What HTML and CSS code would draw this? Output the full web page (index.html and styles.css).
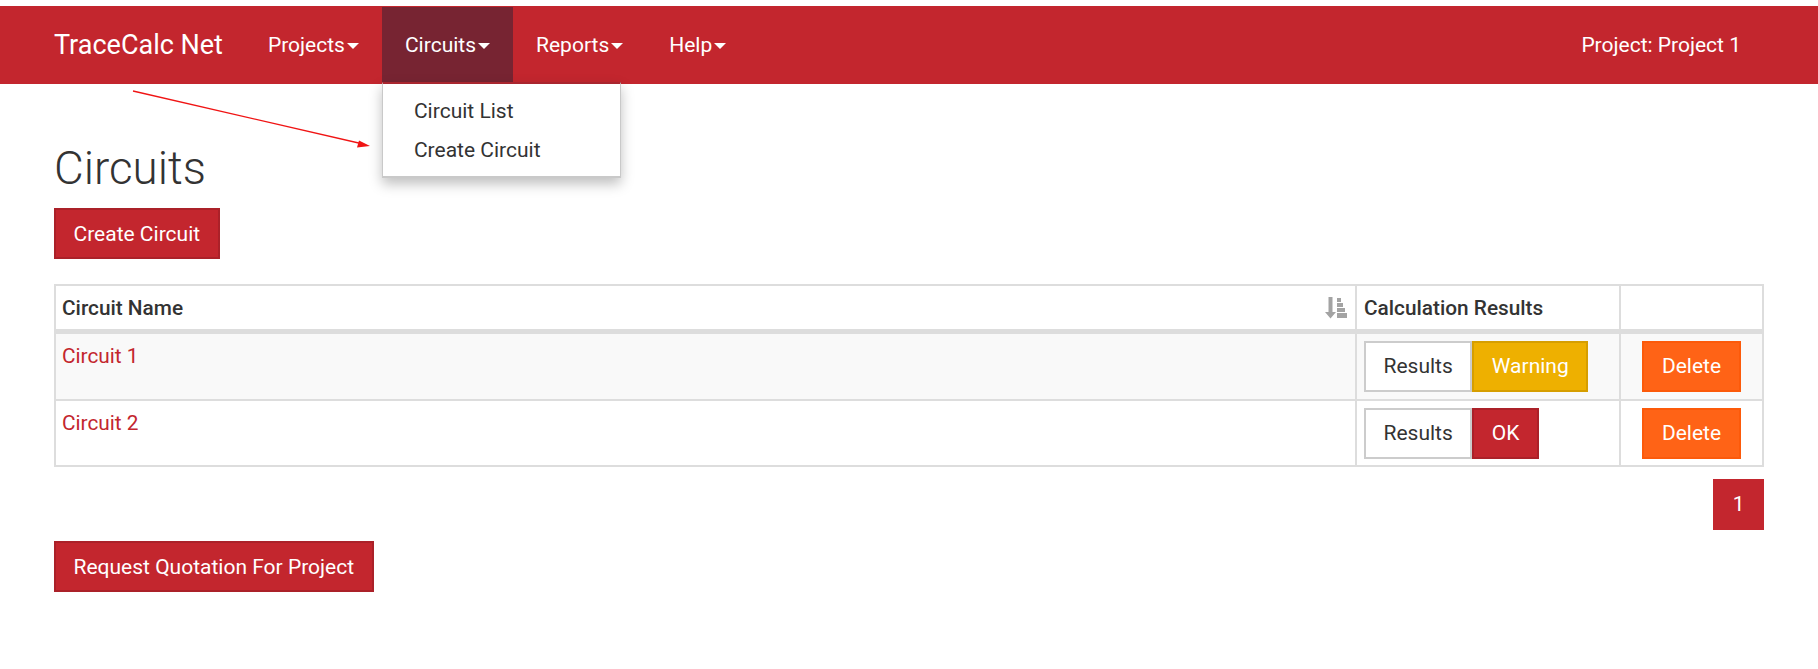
FILE: index.html
```html
<!DOCTYPE html>
<html lang="en">
<head>
<meta charset="utf-8">
<title>TraceCalc Net</title>
<link rel="stylesheet" href="styles.css">
</head>
<body>
<nav class="navbar">
  <a class="brand">TraceCalc Net</a>
  <ul class="nav">
    <li class="nav-item"><a class="nav-link">Projects<span class="caret"></span></a></li>
    <li class="nav-item active"><a class="nav-link">Circuits<span class="caret"></span></a>
      <ul class="dropdown">
        <li class="dropdown-item">Circuit List</li>
        <li class="dropdown-item">Create Circuit</li>
      </ul>
    </li>
    <li class="nav-item"><a class="nav-link">Reports<span class="caret"></span></a></li>
    <li class="nav-item"><a class="nav-link">Help<span class="caret"></span></a></li>
  </ul>
  <div class="project">Project: Project 1</div>
</nav>
<svg class="annotation" width="260" height="70" viewBox="0 0 260 70">
  <line x1="2" y1="2" x2="232" y2="55" stroke="#f01414" stroke-width="1.3"/>
  <polygon points="239,57 226,58.500 228,51.500" fill="#f01414"/>
</svg>
<main class="content">
  <h1 class="title">Circuits</h1>
  <button class="btn btn-primary">Create Circuit</button>
  <table class="grid">
    <thead>
      <tr>
        <th class="col-name"><div class="th-inner">Circuit Name
          <svg class="sort-icon" width="22" height="22" viewBox="0 0 22 22"><path d="M3.500 0h4v15h3.500l-5.500 6.500-5.500-6.500h3.500z" fill="#a3a3a3"/><path d="M12 1h4v4h-4zM12 6h6v4h-6zM12 11h8v4h-8zM12 16h10v5h-10z" fill="#a3a3a3"/></svg>
        </div></th>
        <th class="col-results">Calculation Results</th>
        <th class="col-actions"></th>
      </tr>
    </thead>
    <tbody>
      <tr class="odd">
        <td class="cell-name"><a class="link">Circuit 1</a></td>
        <td class="cell-results"><div class="btn-group"><button class="btn btn-default">Results</button><button class="btn btn-warning">Warning</button></div></td>
        <td class="center"><button class="btn btn-danger">Delete</button></td>
      </tr>
      <tr class="last">
        <td class="cell-name"><a class="link">Circuit 2</a></td>
        <td class="cell-results"><div class="btn-group"><button class="btn btn-default">Results</button><button class="btn btn-primary">OK</button></div></td>
        <td class="center"><button class="btn btn-danger">Delete</button></td>
      </tr>
    </tbody>
  </table>
  <div class="pagination"><span class="page">1</span></div>
  <button class="btn btn-primary">Request Quotation For Project</button>
</main>
</body>
</html>
```
FILE: styles.css
```css
* { box-sizing: border-box; }
html, body { margin: 0; padding: 0; }
body {
  position: relative;
  padding-top: 6px;
  font-family: Roboto, "Liberation Sans", sans-serif;
  font-size: 20.8px;
  line-height: 30px;
  color: #333;
  background: #fff;
}
.navbar {
  display: flex;
  align-items: stretch;
  height: 78px;
  padding: 0 54px;
  background: #c3262e;
  color: #fff;
}
.brand {
  display: flex;
  align-items: center;
  font-size: 27px;
  margin-right: 22px;
}
.nav {
  display: flex;
  list-style: none;
  margin: 0;
  padding: 0;
  flex: 1;
  font-size: 21px;
}
.nav-item { position: relative; }
.nav-link {
  display: flex;
  align-items: center;
  height: 78px;
  padding: 0 23px;
  color: #fff;
}
.nav-item.active .nav-link {
  background: #772432;
  border-top: 1px solid #c3262e;
  background-clip: padding-box;
  padding-bottom: 1px;
}
.caret {
  display: inline-block;
  margin-left: 2px;
  margin-top: 2px;
  border-top: 6px solid #fff;
  border-left: 6px solid transparent;
  border-right: 6px solid transparent;
}
.dropdown {
  position: absolute;
  top: 76px;
  left: 0;
  width: 239px;
  height: 96px;
  margin: 0;
  padding: 6px 0;
  list-style: none;
  background: #fff;
  border: 1px solid #c9c9c9;
  border-bottom-width: 2px;
  border-top: 2px solid #a9262f;
  box-shadow: 0 6px 12px rgba(0, 0, 0, .25);
  color: #333;
  z-index: 5;
}
.dropdown-item {
  padding: 0 31px;
  line-height: 39px;
}
.dropdown-item:first-child { margin-top: 2px; }
.project {
  display: flex;
  align-items: center;
  margin-right: 23px;
  font-size: 21px;
}
.annotation {
  position: absolute;
  left: 131px;
  top: 89px;
  z-index: 6;
}
.content { padding: 0 54px; }
.title {
  margin: 0;
  padding-top: 60px;
  font-size: 45.76px;
  line-height: 50px;
  font-weight: 300;
  color: #333;
  height: 124px;
}
.btn {
  display: inline-block;
  height: 51px;
  padding: 0 17.5px;
  font-family: inherit;
  font-size: 21px;
  line-height: 30px;
  border: 2px solid transparent;
  border-radius: 0;
  cursor: pointer;
}
.btn-primary { background: #c3262e; border-color: #ab2129; color: #fff; }
.btn-default { background: #fff; border-color: #ccc; color: #333; }
.btn-warning { background: #eeb000; border-color: #d69e00; color: #fff; }
.btn-danger { background: #ff6316; border-color: #fc5a0a; color: #fff; }
.grid {
  width: 100%;
  margin-top: 25px;
  border-collapse: collapse;
  table-layout: fixed;
}
.grid th, .grid td {
  border: 2px solid #ddd;
  padding: 7px 8px;
  text-align: left;
  vertical-align: top;
}
.grid th {
  border-bottom-width: 5px;
  padding: 7px 8px 6px;
  font-weight: 500;
}
.grid .col-name, .grid .cell-name { padding-left: 6px; }
.grid .col-results, .grid .cell-results { padding-left: 7px; }
.grid td .btn { padding-bottom: 2px; }
.grid .last td { padding-bottom: 6px; }
.col-results { width: 264px; }
.col-actions { width: 143px; }
.th-inner {
  display: flex;
  justify-content: space-between;
  align-items: center;
}
.odd td { background: #f9f9f9; }
.link { color: #c3262e; }
.btn-group { display: flex; }
.grid .center { text-align: center; }
.pagination {
  display: flex;
  justify-content: flex-end;
  margin-top: 12px;
  margin-bottom: 11px;
}
.page {
  display: block;
  width: 51px;
  height: 51px;
  line-height: 51px;
  text-align: center;
  background: #c3262e;
  color: #fff;
}
```
